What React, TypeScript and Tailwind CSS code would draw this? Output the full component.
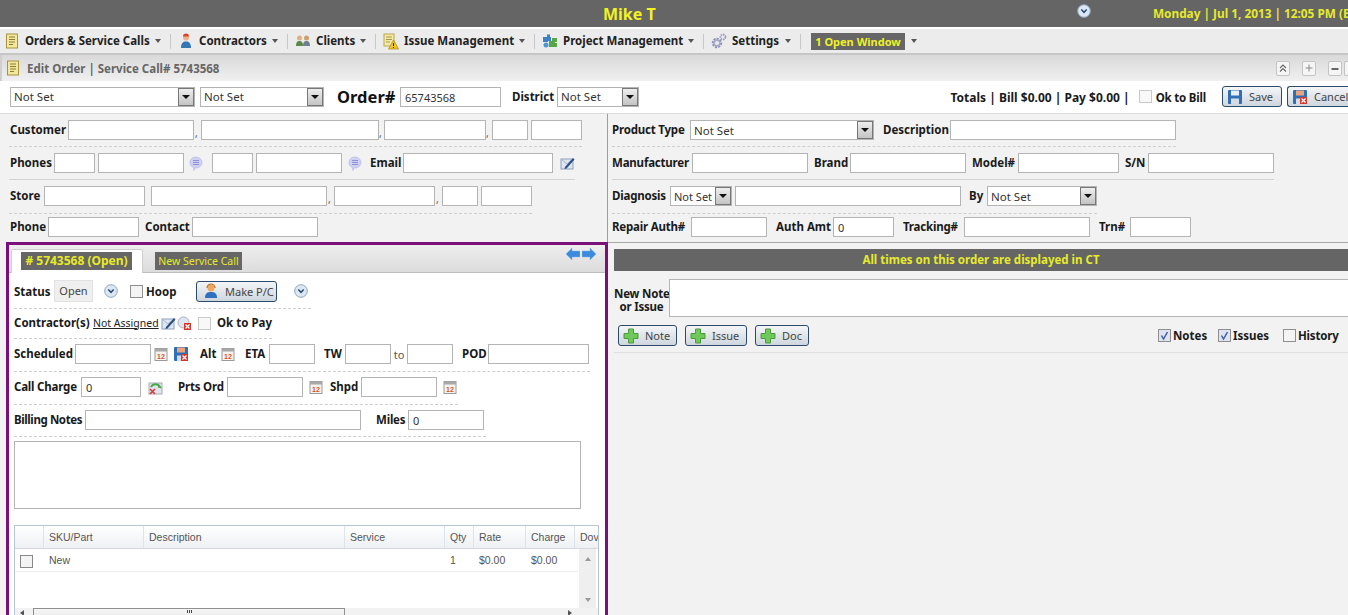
import React from "react";

const font = "font-['Noto_Sans','Liberation_Sans',sans-serif]";
const lbl = "text-[11.5px] font-bold text-[#1a1a1a] whitespace-nowrap leading-none";

function Field({ className = "", value = "" }: { className?: string; value?: string }) {
  return (
    <div className={`h-[20px] shrink-0 bg-white border border-[#b4b4b4] pl-[4px] text-[11px] leading-[20px] text-[#333] ${className}`}>
      {value}
    </div>
  );
}

function Select({ className = "", small = false }: { className?: string; small?: boolean }) {
  return (
    <div className={`h-[20px] shrink-0 bg-white border border-[#b4b4b4] flex items-center justify-between text-[#333] ${className}`}>
      <span className={`pl-[3px] pt-[1px] leading-none whitespace-nowrap ${small ? "text-[11px]" : "text-[11.5px]"}`}>Not Set</span>
      <span className="w-[16px] h-[18px] shrink-0 flex items-center justify-center bg-gradient-to-b from-[#eeeeee] to-[#c4c4c4] border border-[#777]">
        <span className="w-0 h-0 border-x-[4px] border-x-transparent border-t-[4px] border-t-[#111]" />
      </span>
    </div>
  );
}

function Label({ className = "", children }: { className?: string; children: React.ReactNode }) {
  return <span className={`${lbl} shrink-0 ${className}`}>{children}</span>;
}

function Comma({ className = "" }: { className?: string }) {
  return <span className={`text-[10px] text-[#555] self-end leading-[14px] shrink-0 ${className}`}>,</span>;
}

function Caret({ className = "" }: { className?: string }) {
  return <span className={`w-0 h-0 shrink-0 border-x-[3px] border-x-transparent border-t-[4px] border-t-[#555] ${className}`} />;
}

function DocIcon({ className = "" }: { className?: string }) {
  return (
    <svg viewBox="0 0 14 16" className={`w-[14px] h-[16px] shrink-0 ${className}`}>
      <rect x="1.5" y="1" width="11" height="14" fill="#f3e79a" stroke="#a89440" />
      <path d="M4 4h6M4 6.5h6M4 9h6M4 11.5h4" stroke="#8a7a3a" strokeWidth="1" />
    </svg>
  );
}

function UserIcon({ className = "" }: { className?: string }) {
  return (
    <svg viewBox="0 0 14 16" className={`w-[14px] h-[16px] shrink-0 ${className}`}>
      <circle cx="7" cy="4.5" r="3" fill="#eeb28a" />
      <path d="M4 3.5a3 3 0 0 1 6 0z" fill="#d8452b" />
      <path d="M2 15c0-5 2-6.500 5-6.500S12 10 12 15z" fill="#3577b5" />
    </svg>
  );
}

function HeadsetIcon() {
  return (
    <svg viewBox="0 0 16 16" className="w-[16px] h-[16px] shrink-0">
      <circle cx="8" cy="5" r="3.500" fill="#efa860" />
      <path d="M4 5a4 4 0 0 1 8 0" fill="none" stroke="#b8701f" strokeWidth="1.200" />
      <path d="M2 15c0-5 2.500-6 6-6s6 1 6 6z" fill="#2f6fc0" />
    </svg>
  );
}

function ClientsIcon() {
  return (
    <svg viewBox="0 0 16 14" className="w-[16px] h-[14px] shrink-0">
      <circle cx="4.500" cy="4" r="2.500" fill="#e2b27c" />
      <path d="M1 12c0-4 1.500-5 3.500-5S8 8 8 12z" fill="#5b8a4a" />
      <circle cx="11.500" cy="4" r="2.500" fill="#caa06e" />
      <path d="M8 12c0-4 1.500-5 3.500-5S15 8 15 12z" fill="#6f7f8f" />
    </svg>
  );
}

function IssueIcon() {
  return (
    <svg viewBox="0 0 16 17" className="w-[16px] h-[17px] shrink-0">
      <rect x="1" y="1" width="10" height="12" fill="#f4e9a5" stroke="#b8a550" />
      <path d="M3 4h6M3 6.500h6M3 9h4" stroke="#a8974a" />
      <path d="M10.500 7l5 9h-10z" fill="#f2c81e" stroke="#a98510" strokeWidth=".7" />
      <path d="M10.500 10v3M10.500 14v1" stroke="#222" />
    </svg>
  );
}

function PuzzleIcon() {
  return (
    <svg viewBox="0 0 16 16" className="w-[16px] h-[16px] shrink-0">
      <path d="M1 4h4V1.500h3V4h1v4H6v1H1z" fill="#3f7fc4" />
      <path d="M7 8h3V5h5v4h-2v1h2v4H7z" fill="#55a845" />
      <circle cx="4" cy="12" r="2.500" fill="#4f97d2" />
    </svg>
  );
}

function GearIcon() {
  return (
    <svg viewBox="0 0 16 16" className="w-[16px] h-[16px] shrink-0">
      <circle cx="6" cy="10" r="4" fill="none" stroke="#8f92b8" strokeWidth="2.400" strokeDasharray="2 1" />
      <circle cx="6" cy="10" r="2.800" fill="none" stroke="#a8abc8" strokeWidth="1.500" />
      <circle cx="12" cy="4" r="2.500" fill="none" stroke="#9a9dbf" strokeWidth="1.800" strokeDasharray="1.500 .8" />
    </svg>
  );
}

function XBadge({ x = 7, y = 8 }: { x?: number; y?: number }) {
  return (
    <g>
      <rect x={x} y={y} width="7" height="7" fill="#d8352a" />
      <path d={`M${x + 1.5} ${y + 1.5}l4 4m0-4l-4 4`} stroke="#fff" strokeWidth="1.200" />
    </g>
  );
}

function Floppy({ cancel = false, className = "" }: { cancel?: boolean; className?: string }) {
  return (
    <svg viewBox="0 0 16 16" className={`w-[16px] h-[16px] shrink-0 ${className}`}>
      <rect x="1" y="1" width="14" height="14" rx="1" fill="#2f6fb5" />
      <rect x="4" y="1.500" width="8" height="5" fill={cancel ? "#eaa37c" : "#e8eef5"} />
      <rect x="4" y="9.500" width="8" height="5.500" fill="#d5dbe4" />
      {cancel && <XBadge x={8} y={8} />}
    </svg>
  );
}

function Calendar({ className = "" }: { className?: string }) {
  return (
    <svg viewBox="0 0 14 14" className={`w-[14px] h-[14px] shrink-0 ${className}`}>
      <rect x="1" y="1.500" width="12" height="12" fill="#f6f3ee" stroke="#9a9a9a" />
      <rect x="1" y="1.500" width="12" height="3" fill="#a8a8a8" />
      <text x="7" y="12" textAnchor="middle" fontSize="7" fontWeight="700" fill="#d4552c" fontFamily="Liberation Sans">12</text>
    </svg>
  );
}

function Bubble({ className = "" }: { className?: string }) {
  return (
    <svg viewBox="0 0 14 15" className={`w-[14px] h-[15px] shrink-0 ${className}`}>
      <path d="M7 1a6 5.500 0 0 1 0 11H6l-1 2.500-.5-3A6 5.500 0 0 1 7 1z" fill="#cfd0f2" stroke="#b0b2e4" strokeWidth=".6" />
      <path d="M4 4.500h6M4 6.500h6M4 8.500h6" stroke="#8d90d8" />
    </svg>
  );
}

function MailEdit({ className = "" }: { className?: string }) {
  return (
    <svg viewBox="0 0 15 15" className={`w-[15px] h-[15px] shrink-0 ${className}`}>
      <rect x="1" y="3" width="12" height="10" fill="#dde6f2" stroke="#8ba0bc" />
      <path d="M1 3l6 5 6-5" fill="none" stroke="#a4b4ca" />
      <path d="M5 11l8-9 1.500 1.500-8 9-2 .5z" fill="#2d4f80" />
    </svg>
  );
}

function CircleDown({ className = "" }: { className?: string }) {
  return (
    <svg viewBox="0 0 14 14" className={`w-[14px] h-[14px] shrink-0 ${className}`}>
      <circle cx="7" cy="7" r="6.300" fill="#dbe8f4" stroke="#8fa6bd" />
      <path d="M4.300 5.500L7 8.300l2.700-2.800" fill="none" stroke="#2c4a6e" strokeWidth="1.500" />
    </svg>
  );
}

function Plus() {
  return (
    <svg viewBox="0 0 16 16" className="w-[16px] h-[16px] shrink-0">
      <path d="M5.500 1h5v4.500H15v5h-4.500V15h-5v-4.500H1v-5h4.500z" fill="#6fc85a" stroke="#4c9c3a" />
    </svg>
  );
}

function Check({ checked = false, className = "" }: { checked?: boolean; className?: string }) {
  return (
    <span className={`w-[13px] h-[13px] shrink-0 flex items-center justify-center border border-[#8f8f8f] ${checked ? "bg-[#dfe3f1]" : "bg-[#f4f4f4]"} ${className}`}>
      {checked && (
        <svg viewBox="0 0 11 11" className="w-[11px] h-[11px]">
          <path d="M2.500 5.500l2 3.500 4-7" fill="none" stroke="#3f5f9f" strokeWidth="1.500" />
        </svg>
      )}
    </span>
  );
}

function Btn({ className = "", icon, children }: { className?: string; icon: React.ReactNode; children: React.ReactNode }) {
  return (
    <div className={`h-[21px] shrink-0 flex items-center pl-[4px] gap-[6px] rounded-[3px] border border-[#2c4a6b] bg-gradient-to-b from-[#f4f6f8] to-[#cfd6de] text-[11px] text-[#444] leading-none overflow-hidden whitespace-nowrap ${className}`}>
      {icon}
      <span>{children}</span>
    </div>
  );
}

function NavItem({ icon, text, width, first = false }: { icon: React.ReactNode; text: string; width: string; first?: boolean }) {
  return (
    <>
      <span className={`${first ? "ml-[4px]" : "ml-[7px]"} flex items-center justify-center w-[16px] shrink-0`}>{icon}</span>
      <span className={`ml-[5px] ${width} shrink-0 text-[11.5px] font-bold text-[#222] leading-none whitespace-nowrap`}>{text}</span>
      <Caret />
      <span className="ml-[9px] w-px h-[15px] bg-[#c8c8c8] shrink-0" />
    </>
  );
}

function WinBtn({ className = "", children }: { className?: string; children: React.ReactNode }) {
  return (
    <span className={`w-[14px] h-[15px] flex items-center justify-center border border-[#c4c4c4] rounded-[2px] bg-[#f5f5f5] text-[#666] shrink-0 ${className}`}>
      {children}
    </span>
  );
}

export default function App() {
  const tableHead = "h-full flex items-center pl-[5px] pt-[2px] border-r border-[#dde3ea] shrink-0";

  return (
    <div className={`${font} h-[615px] w-[1348px] overflow-hidden flex flex-col bg-[#f2f2f2]`}>
      <div className="h-[27px] shrink-0 bg-[#656565] flex items-center whitespace-nowrap overflow-hidden">
        <span className="ml-[603px] w-[54px] text-[16px] font-bold text-[#f2f21e] leading-none shrink-0">Mike T</span>
        <CircleDown className="ml-[420px] -mt-[6px]" />
        <span className="ml-[62px] text-[11.8px] font-bold text-[#e6ea2c] leading-none shrink-0">Monday | Jul 1, 2013 | 12:05 PM (EST)</span>
      </div>

      <div className="h-[28px] shrink-0 bg-[#ececec] border-t-2 border-t-white border-b-2 border-b-[#c6c6c6] flex items-center">
        <NavItem first icon={<DocIcon />} text="Orders & Service Calls" width="w-[130px]" />
        <NavItem icon={<UserIcon />} text="Contractors" width="w-[73px]" />
        <NavItem icon={<ClientsIcon />} text="Clients" width="w-[44px]" />
        <NavItem icon={<IssueIcon />} text="Issue Management" width="w-[115px]" />
        <NavItem icon={<PuzzleIcon />} text="Project Management" width="w-[125px]" />
        <NavItem icon={<GearIcon />} text="Settings" width="w-[53px]" />
        <span className="ml-[10px] w-[94px] h-[17px] bg-[#666] text-[#eef02a] text-[11px] font-bold leading-[17px] text-center whitespace-nowrap shrink-0">1 Open Window</span>
        <Caret className="ml-[6px]" />
      </div>

      <div className="h-[26px] shrink-0 bg-gradient-to-b from-[#d9d9d9] to-[#f0f0f0] flex items-center border-l-2 border-l-[#cfcfcf]">
        <DocIcon className="ml-[4px]" />
        <span className="ml-[7px] pt-[1px] text-[11.5px] font-bold text-[#666] leading-none whitespace-nowrap">Edit Order | Service Call# 5743568</span>
        <span className="ml-auto flex items-center">
          <WinBtn>
            <svg viewBox="0 0 10 10" className="w-[10px] h-[10px]">
              <path d="M2 5l3-3 3 3M2 8.500l3-3 3 3" fill="none" stroke="#666" strokeWidth="1.100" />
            </svg>
          </WinBtn>
          <WinBtn className="ml-[12px]">
            <svg viewBox="0 0 10 10" className="w-[10px] h-[10px]">
              <path d="M5 1.500v7M1.500 5h7" stroke="#888" strokeWidth="1" />
            </svg>
          </WinBtn>
          <WinBtn className="ml-[12px]">
            <svg viewBox="0 0 10 10" className="w-[10px] h-[10px]">
              <path d="M1.500 6h7" stroke="#444" strokeWidth="1.600" />
            </svg>
          </WinBtn>
          <span className="ml-[2px] w-[4px] h-[15px] border border-r-0 border-[#c4c4c4] rounded-l-[2px] bg-[#f5f5f5]" />
        </span>
      </div>

      <div className="h-[33px] shrink-0 bg-white border-b border-[#dcdcdc] flex items-center pb-[1px]">
        <Select className="ml-[10px] w-[185px]" />
        <Select className="ml-[5px] w-[124px]" />
        <span className="ml-[13px] w-[63px] pt-[2px] shrink-0 text-[16.5px] font-bold text-[#111] leading-none">Order#</span>
        <Field className="w-[101px]" value="65743568" />
        <Label className="ml-[11px] w-[45px] pt-[1px]">District</Label>
        <Select className="w-[82px]" />
        <span className="ml-auto pt-[2px] text-[12px] font-bold text-[#1a1a1a] whitespace-nowrap leading-none">Totals | Bill $0.00 | Pay $0.00 |</span>
        <Check className="ml-[9px] border-[#c9c9c9] bg-[#f8f8f8]" />
        <Label className="ml-[4px] pt-[2px] tracking-[-0.2px]">Ok to Bill</Label>
        <Btn className="ml-[16px] w-[60px]" icon={<Floppy />}>Save</Btn>
        <Btn className="ml-[5px] w-[61px] rounded-r-none border-r-0" icon={<Floppy cancel />}>Cancel</Btn>
      </div>

      <div className="h-[128px] shrink-0 flex">
        <div className="w-[607px] shrink-0 pl-[9px] pt-[6px]">
          <div className="flex items-center">
            <Label className="w-[59px] pl-[1px]">Customer</Label>
            <Field className="w-[126px]" />
            <Comma className="w-[7px] pl-[1px]" />
            <Field className="w-[178px]" />
            <Comma className="w-[5px]" />
            <Field className="w-[102px]" />
            <Comma className="w-[6px]" />
            <Field className="w-[36px]" />
            <Field className="ml-[3px] w-[51px]" />
          </div>
          <div className="mt-[6px] w-[573px] border-t border-dashed border-[#cfcfcf]" />
          <div className="mt-[6px] flex items-center">
            <Label className="w-[45px] pl-[1px]">Phones</Label>
            <Field className="w-[41px]" />
            <Field className="ml-[3px] w-[86px]" />
            <Bubble className="ml-[5px]" />
            <Field className="ml-[9px] w-[41px]" />
            <Field className="ml-[3px] w-[86px]" />
            <Bubble className="ml-[6px]" />
            <Label className="ml-[8px] w-[33px]">Email</Label>
            <Field className="w-[150px]" />
            <MailEdit className="ml-[7px]" />
          </div>
          <div className="mt-[6px] w-[566px] border-t border-[#d2d2d2]" />
          <div className="mt-[6px] flex items-center">
            <Label className="w-[35px] pl-[1px]">Store</Label>
            <Field className="w-[101px]" />
            <Field className="ml-[6px] w-[176px]" />
            <Comma className="w-[7px] pl-[1px]" />
            <Field className="w-[101px]" />
            <Comma className="w-[7px] pl-[1px]" />
            <Field className="w-[36px]" />
            <Field className="ml-[3px] w-[51px]" />
          </div>
          <div className="mt-[7px] w-[523px] border-t border-dashed border-[#cfcfcf]" />
          <div className="mt-[3px] flex items-center">
            <Label className="w-[39px] pl-[1px]">Phone</Label>
            <Field className="w-[91px]" />
            <Label className="ml-[6px] w-[47px]">Contact</Label>
            <Field className="w-[126px]" />
          </div>
        </div>

        <div className="flex-1 border-l border-[#9d9d9d] pl-[4px] pt-[6px]">
          <div className="flex items-center">
            <Label className="w-[78px] tracking-[-0.2px]">Product Type</Label>
            <Select className="w-[184px]" />
            <Label className="ml-[9px] w-[67px]">Description</Label>
            <Field className="w-[226px]" />
          </div>
          <div className="mt-[6px] w-[564px] border-t border-dashed border-[#cfcfcf]" />
          <div className="mt-[6px] flex items-center">
            <Label className="w-[80px] tracking-[-0.2px]">Manufacturer</Label>
            <Field className="w-[116px]" />
            <Label className="ml-[6px] w-[36px]">Brand</Label>
            <Field className="w-[116px]" />
            <Label className="ml-[6px] w-[46px]">Model#</Label>
            <Field className="w-[101px]" />
            <Label className="ml-[6px] w-[23px]">S/N</Label>
            <Field className="w-[126px]" />
          </div>
          <div className="mt-[6px] w-[662px] border-t border-[#d2d2d2]" />
          <div className="mt-[6px] flex items-center">
            <Label className="w-[58px] tracking-[-0.2px]">Diagnosis</Label>
            <Select small className="w-[62px]" />
            <Field className="ml-[3px] w-[226px]" />
            <Label className="ml-[8px] w-[18px]">By</Label>
            <Select className="w-[110px]" />
          </div>
          <div className="mt-[7px] w-[485px] border-t border-dashed border-[#cfcfcf]" />
          <div className="mt-[3px] flex items-center">
            <Label className="w-[79px] tracking-[-0.2px]">Repair Auth#</Label>
            <Field className="w-[76px]" />
            <Label className="ml-[9px] w-[57px]">Auth Amt</Label>
            <Field className="w-[61px]" value="0" />
            <Label className="ml-[9px] w-[61px] tracking-[-0.2px]">Tracking#</Label>
            <Field className="w-[126px]" />
            <Label className="ml-[9px] w-[31px]">Trn#</Label>
            <Field className="w-[61px]" />
          </div>
        </div>
      </div>

      <div className="h-[373px] shrink-0 flex overflow-hidden">
        <div className="ml-[6px] w-[602px] shrink-0 border-x-[3px] border-t-[3px] border-[#7b0f7b] bg-white h-[400px]">
          <div className="h-[28px] bg-gradient-to-b from-[#eeeeee] to-[#dcdcdc] border-b border-[#bdbdbd] flex">
            <div className="ml-[2px] mt-[4px] w-[132px] h-[24px] bg-white border border-b-0 border-[#cfcfcf] rounded-t-[2px] flex items-start pl-[9px] pt-[2px]">
              <span className="w-[111px] h-[18px] bg-[#666] text-[#e8ea26] text-[12px] font-bold leading-[18px] text-center whitespace-nowrap">
                # 5743568 (Open)
              </span>
            </div>
            <span className="ml-[12px] mt-[7px] w-[87px] h-[18px] bg-[#666] text-[#e8ea26] text-[10.5px] leading-[18px] text-center whitespace-nowrap">
              New Service Call
            </span>
            <span className="ml-auto mr-[9px] mt-[3px] flex gap-[2px] h-[14px]">
              <svg viewBox="0 0 14 12" className="w-[14px] h-[12px]">
                <path d="M0 6l6-6v3h8v6H6v3z" fill="#3d8bdc" stroke="#7cb0e8" strokeWidth=".5" />
              </svg>
              <svg viewBox="0 0 14 12" className="w-[14px] h-[12px]">
                <path d="M14 6L8 0v3H0v6h8v3z" fill="#3d8bdc" stroke="#7cb0e8" strokeWidth=".5" />
              </svg>
            </span>
          </div>

          <div className="pl-[5px]">
            <div className="mt-[7px] flex items-center h-[22px]">
              <Label className="w-[40px] pt-[1px]">Status</Label>
              <span className="w-[39px] h-[22px] bg-[#efefef] border border-[#e2e2e2] text-[11px] leading-[20px] text-center text-[#444] shrink-0">Open</span>
              <CircleDown className="ml-[11px]" />
              <Check className="ml-[12px]" />
              <Label className="ml-[3px] w-[50px] pt-[1px]">Hoop</Label>
              <Btn className="w-[81px] pl-[6px]" icon={<HeadsetIcon />}>Make P/C</Btn>
              <CircleDown className="ml-[17px]" />
            </div>
            <div className="mt-[6px] w-[297px] border-t border-dashed border-[#cfcfcf]" />
            <div className="mt-[4px] flex items-center h-[20px]">
              <Label className="w-[79px]">Contractor(s)</Label>
              <span className="w-[68px] text-[10.5px] underline text-[#222] whitespace-nowrap shrink-0 leading-none">Not Assigned</span>
              <MailEdit />
              <svg viewBox="0 0 15 15" className="w-[15px] h-[15px] ml-[1px] shrink-0">
                <circle cx="6.500" cy="6.500" r="5.500" fill="#dfe6ee" stroke="#9eb0c4" />
                <XBadge x={7} y={7} />
              </svg>
              <Check className="ml-[6px] border-[#c9c9c9] bg-[#f8f8f8]" />
              <Label className="ml-[6px]">Ok to Pay</Label>
            </div>
            <div className="mt-[5px] w-[258px] border-t border-dashed border-[#cfcfcf]" />
            <div className="mt-[5px] flex items-center">
              <Label className="w-[61px]">Scheduled</Label>
              <Field className="w-[76px]" />
              <Calendar className="ml-[3px]" />
              <Floppy cancel className="ml-[5px]" />
              <Label className="ml-[11px] w-[21px]">Alt</Label>
              <Calendar />
              <Label className="ml-[10px] w-[24px]">ETA</Label>
              <Field className="w-[46px]" />
              <Label className="ml-[9px] w-[21px]">TW</Label>
              <Field className="w-[46px]" />
              <span className="w-[16px] text-[11px] text-[#555] text-center leading-none shrink-0">to</span>
              <Field className="w-[46px]" />
              <Label className="ml-[9px] w-[26px]">POD</Label>
              <Field className="w-[101px]" />
            </div>
            <div className="mt-[7px] w-[576px] border-t border-dashed border-[#cfcfcf]" />
            <div className="mt-[5px] flex items-center">
              <Label className="w-[67px] tracking-[-0.2px]">Call Charge</Label>
              <Field className="w-[60px]" value="0" />
              <svg viewBox="0 0 15 15" className="w-[15px] h-[15px] ml-[7px] shrink-0">
                <rect x="1" y="3" width="13" height="11" fill="#dfe4ec" stroke="#a5aeba" />
                <path d="M3 7a5 5 0 0 1 9 0l-2-.500" fill="none" stroke="#4aa84a" strokeWidth="2" />
                <path d="M2 9l5 5m0-5l-5 5" stroke="#d83a3a" strokeWidth="1.600" />
              </svg>
              <Label className="ml-[15px] w-[49px] tracking-[-0.2px]">Prts Ord</Label>
              <Field className="w-[76px]" />
              <Calendar className="ml-[6px]" />
              <Label className="ml-[7px] w-[31px]">Shpd</Label>
              <Field className="w-[76px]" />
              <Calendar className="ml-[6px]" />
            </div>
            <div className="mt-[7px] w-[444px] border-t border-dashed border-[#cfcfcf]" />
            <div className="mt-[5px] flex items-center">
              <Label className="w-[71px] tracking-[-0.4px]">Billing Notes</Label>
              <Field className="w-[276px]" />
              <Label className="ml-[15px] w-[32px] tracking-[-0.2px]">Miles</Label>
              <Field className="w-[76px]" value="0" />
            </div>
            <div className="mt-[6px] w-[472px] border-t border-dashed border-[#cfcfcf]" />
            <div className="mt-[4px] w-[567px] h-[68px] bg-white border border-[#b4b4b4]" />

            <div className="mt-[16px] w-[585px] border border-[#b6c6d2] text-[10.5px] text-[#555] font-['Liberation_Sans',sans-serif]">
              <div className="h-[23px] flex items-center bg-gradient-to-b from-[#ffffff] to-[#eef0f3] border-b border-[#d5d9de] overflow-hidden whitespace-nowrap">
                <div className={`${tableHead} w-[29px]`} />
                <div className={`${tableHead} w-[100px]`}>SKU/Part</div>
                <div className={`${tableHead} w-[201px]`}>Description</div>
                <div className={`${tableHead} w-[100px]`}>Service</div>
                <div className={`${tableHead} w-[29px]`}>Qty</div>
                <div className={`${tableHead} w-[52px]`}>Rate</div>
                <div className={`${tableHead} w-[49px]`}>Charge</div>
                <div className="pl-[5px] pt-[2px] w-[24px] overflow-hidden">Dov</div>
              </div>
              <div className="h-[59px] flex">
                <div className="flex-1">
                  <div className="h-[23px] flex items-center pt-[2px] border-b border-[#eeeeee]">
                    <span className="w-[29px] pl-[5px] shrink-0">
                      <Check className="border-[#888] bg-[#f0f0f0]" />
                    </span>
                    <span className="w-[100px] pl-[5px] shrink-0">New</span>
                    <span className="w-[301px] shrink-0" />
                    <span className="w-[29px] pl-[5px] shrink-0">1</span>
                    <span className="w-[52px] pl-[5px] shrink-0">$0.00</span>
                    <span className="w-[49px] pl-[5px] shrink-0">$0.00</span>
                  </div>
                </div>
                <div className="w-[17px] mr-[2px] bg-[#efefef] flex flex-col items-center pt-[8px] pb-[6px] justify-between">
                  <span className="w-0 h-0 border-x-[3px] border-x-transparent border-b-[4px] border-b-[#999]" />
                  <span className="w-0 h-0 border-x-[3px] border-x-transparent border-t-[4px] border-t-[#999]" />
                </div>
              </div>
              <div className="h-[16px] flex items-start bg-[#f2f2f2]">
                <span className="ml-[5px] mt-[2px] w-0 h-0 border-y-[3px] border-y-transparent border-r-[4px] border-r-[#555]" />
                <span className="ml-[9px] w-[312px] h-[16px] bg-gradient-to-b from-[#f6f6f6] to-[#e4e4e4] border border-[#8f8f8f] flex justify-center gap-[1px] pt-[1px]">
                  <span className="w-px h-[3px] bg-[#444]" />
                  <span className="w-px h-[3px] bg-[#444]" />
                  <span className="w-px h-[3px] bg-[#444]" />
                </span>
                <span className="ml-[223px] mt-[2px] w-0 h-0 border-y-[3px] border-y-transparent border-l-[4px] border-l-[#555]" />
              </div>
            </div>
          </div>
        </div>

        <div className="flex-1 min-w-0 pl-[6px] pt-[6px] border-t border-[#a8a8a8]">
          <div className="h-[22px] bg-[#656565] text-[#e6ea2c] text-[11.5px] font-bold leading-[22px] text-center whitespace-nowrap">
            All times on this order are displayed in CT
          </div>
          <div className="mt-[8px] flex items-center">
            <span className="w-[55px] pt-[3px] shrink-0 text-[11.5px] font-bold text-[#1a1a1a] text-center leading-[13px] whitespace-nowrap tracking-[-0.2px]">
              New Note
              <br />
              or Issue
            </span>
            <div className="flex-1 h-[38px] bg-white border border-[#b4b4b4] border-r-0" />
          </div>
          <div className="mt-[8px] flex items-center pl-[4px]">
            <Btn className="w-[59px]" icon={<Plus />}>Note</Btn>
            <Btn className="ml-[8px] w-[62px]" icon={<Plus />}>Issue</Btn>
            <Btn className="ml-[8px] w-[54px]" icon={<Plus />}>Doc</Btn>
            <Check checked className="ml-[349px]" />
            <Label className="ml-[2px] w-[45px]">Notes</Label>
            <Check checked />
            <Label className="ml-[2px] w-[50px]">Issues</Label>
            <Check />
            <Label className="ml-[2px] tracking-[-0.2px]">History</Label>
          </div>
          <div className="mt-[6px] border-t border-[#dfdfdf]" />
        </div>
      </div>
    </div>
  );
}
